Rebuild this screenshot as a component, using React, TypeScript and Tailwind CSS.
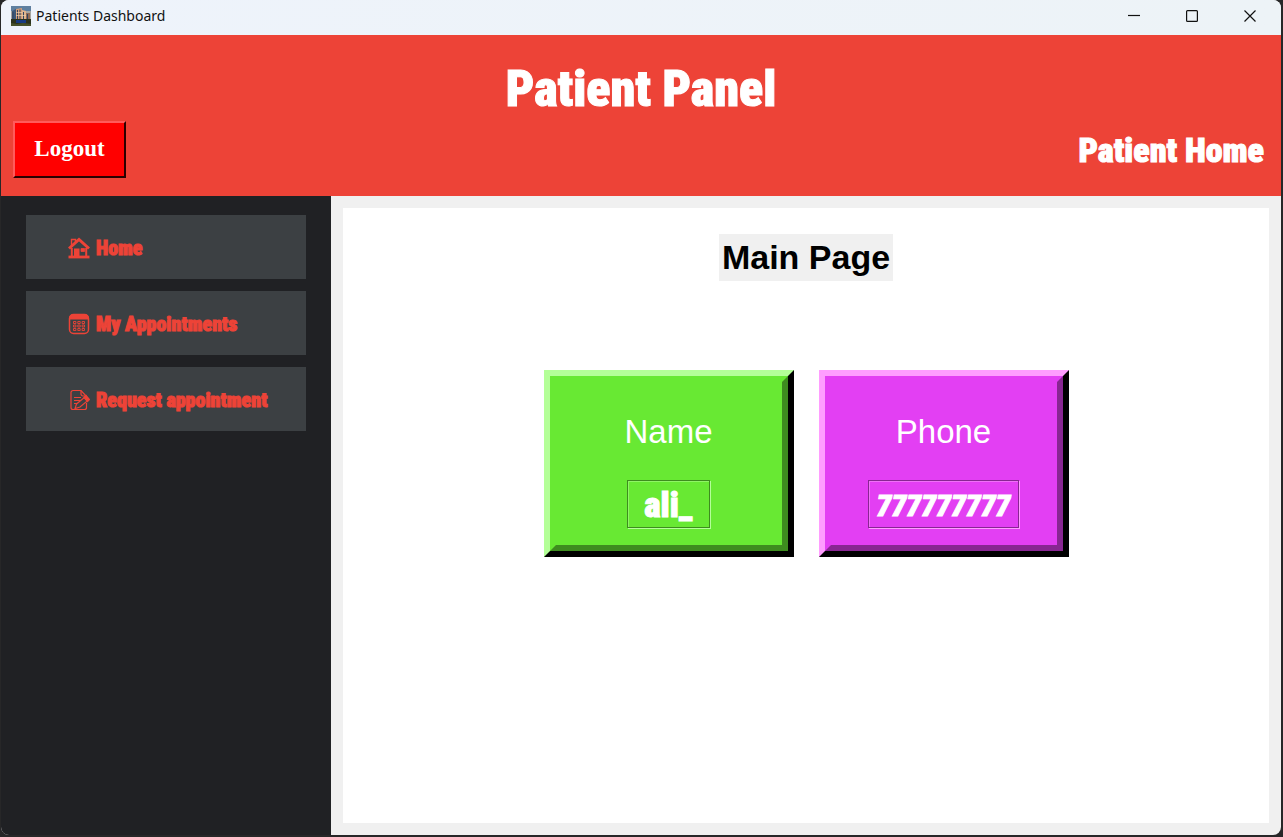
import React from "react";

const display =
  "font-['Impact','Roboto_Condensed','Liberation_Sans_Narrow',sans-serif] font-black";

function AppIcon() {
  return (
    <svg width="20" height="20" viewBox="0 0 20 20" aria-hidden="true">
      <rect width="20" height="20" fill="#5f7f9f" />
      <rect y="5" width="20" height="8" fill="#a6a5a0" />
      <path d="M1 5l4-2v11H1z" fill="#3c5878" />
      <path d="M5 3l6-1v12H5z" fill="#d09d78" />
      <path d="M11 4l4 1v9h-4z" fill="#e0b48d" />
      <path d="M15 7h4v7h-4z" fill="#8f6a55" />
      <path d="M2 6v7M6.5 4v9M9 3.500v9.500M12.500 6v7M16.500 8v5" stroke="#34435d" />
      <path d="M5 6.500h6M5 9.500h10" stroke="#f0d2aa" strokeWidth=".7" />
      <path d="M0 13h20v7H0z" fill="#2b321d" />
      <path d="M5 14h10v3H5z" fill="#173b82" />
      <path d="M0 17l6 1 6-1 8 1v2H0z" fill="#47512b" />
    </svg>
  );
}

function HomeIcon() {
  return (
    <svg width="22" height="22" viewBox="0 0 22 22" fill="none" stroke="currentColor" aria-hidden="true">
      <path d="M1 11.500L11 2.500l10 9" strokeWidth="3" />
      <path d="M3.500 9V2.500h4v3" strokeWidth="1.400" />
      <path d="M3.800 11v9M18.200 11v9" strokeWidth="2" />
      <path d="M0.500 20h21" strokeWidth="2.800" />
      <path d="M6 11.500h5.500V20H6z" fill="currentColor" stroke="none" />
      <path d="M13 11.500h3.500v3H13z" fill="currentColor" strokeWidth=".8" />
    </svg>
  );
}

function CalendarIcon() {
  return (
    <svg width="22" height="22" viewBox="0 0 22 22" fill="none" stroke="currentColor" aria-hidden="true">
      <rect x="1.500" y="1.500" width="19" height="19" rx="4" strokeWidth="1.500" />
      <path d="M1.500 6V5a3.500 3.500 0 0 1 3.500-3.500h12A3.500 3.500 0 0 1 20.500 5v1z" fill="currentColor" />
      <path
        d="M5.500 8.500h2.400v2H5.500zM9.800 8.500h2.400v2H9.800zM14.100 8.500h2.400v2h-2.400zM5.500 12h2.400v2H5.500zM9.800 12h2.400v2H9.800zM14.100 12h2.400v2h-2.400zM5.500 15.500h2.400v2H5.500zM9.800 15.500h2.400v2H9.800zM14.100 15.500h2.400v2h-2.400z"
        strokeWidth=".9"
      />
    </svg>
  );
}

function RequestIcon() {
  return (
    <svg width="22" height="22" viewBox="0 0 22 22" fill="none" stroke="currentColor" strokeWidth="1.200" aria-hidden="true">
      <path d="M18.500 7.500L13 1.500H5A2 2 0 0 0 3 3.500v15a2 2 0 0 0 2 2h11.500a2 2 0 0 0 2-2V14" />
      <path d="M13 1.500v3.500a2 2 0 0 0 2 2h3.500" />
      <path d="M6 8.500h7M6 11.500h7M6 14.500h3" strokeWidth="1" />
      <path d="M8.500 15l9-7.500 3 3.500-8.500 7-5 1.500z" />
      <path d="M16 8.500l2-2 3.500 4-2 2z" fill="currentColor" />
    </svg>
  );
}

const links = [
  { label: "Home", Icon: HomeIcon },
  { label: "My Appointments", Icon: CalendarIcon },
  { label: "Request appointment", Icon: RequestIcon },
];

function WindowButton({ label, path }: { label: string; path: string }) {
  return (
    <button aria-label={label} className="flex h-8 w-[58px] items-center justify-center">
      <svg width="12" height="12" viewBox="0 0 12 12" fill="none" stroke="#111" strokeWidth="1.200">
        <path d={path} />
      </svg>
    </button>
  );
}

export default function App() {
  return (
    <div className="min-h-screen bg-[#272728] pr-[2px] pb-[2px] pl-px">
      <div className="flex min-h-[calc(100vh-2px)] flex-col overflow-hidden rounded-lg bg-[#f0f0f0]">
        <div className="flex h-[35px] items-center bg-gradient-to-r from-[#eef3fb] to-[#edf3f7] pr-[2px] pb-1 pl-[10px]">
          <AppIcon />
          <span className="ml-[5px] font-['Noto_Sans',sans-serif] text-[14px] text-[#111]">Patients Dashboard</span>
          <div className="ml-auto flex">
            <WindowButton label="Minimize" path="M0 5.500h12" />
            <WindowButton label="Maximize" path="M1.500 .600h9q.900 0 .900.900v9q0 .900-.900.900h-9q-.900 0-.900-.900v-9q0-.900.900-.900z" />
            <WindowButton label="Close" path="M.500.500l11 11M11.500.500l-11 11" />
          </div>
        </div>

        <header className="bg-[#ed4337] px-3 pt-[22px] pb-[18px] text-white">
          <h1 className={`${display} text-center text-[50px] leading-[64px] [-webkit-text-stroke:1px_white]`}>
            Patient Panel
          </h1>
          <div className="flex items-center justify-between pr-[5px]">
            <button className="h-[57px] w-[113px] border-2 border-t-[#ff5b5b] border-r-[#2b0000] border-b-[#2b0000] border-l-[#ff5b5b] bg-[#ff0000] font-['Liberation_Serif',serif] text-[23px] font-bold">
              Logout
            </button>
            <h2 className={`${display} text-[34px] leading-[56px] [-webkit-text-stroke:1px_white]`}>Patient Home</h2>
          </div>
        </header>

        <div className="flex grow">
          <nav className="flex w-[330px] shrink-0 flex-col gap-3 bg-[#202124] px-[25px] pt-[19px]">
            {links.map(({ label, Icon }) => (
              <button key={label} className="flex h-16 items-center gap-[6px] bg-[#3c4043] pt-[2px] pl-[42px] text-[#ed4337]">
                <Icon />
                <span className={`${display} text-[20px] whitespace-nowrap [-webkit-text-stroke:1px_#ed4337]`}>{label}</span>
              </button>
            ))}
          </nav>

          <div className="flex grow p-3">
            <main className="flex grow flex-col items-center bg-white pt-[26px] font-['Liberation_Sans',sans-serif]">
              <h3 className="bg-[#f0f0f0] px-[3px] text-[34px] leading-[47px] font-bold text-black">Main Page</h3>
              <div className="mt-[89px] flex gap-[25px]">
                <Card
                  label="Name"
                  value="ali_"
                  className="border-t-[#b4ff98] border-r-black border-b-black border-l-[#b4ff98] bg-[#68e933]"
                  inner="border-r-[#3e8c1f] border-b-[#3e8c1f]"
                  groove="border-[#3e8c1f] px-4 text-[35px] shadow-[1px_1px_0_#b4ff98,inset_1px_1px_0_#8ff565]"
                />
                <Card
                  label="Phone"
                  value="777777777"
                  className="border-t-[#ff9dff] border-r-black border-b-black border-l-[#ff9dff] bg-[#e33ff3]"
                  inner="border-r-[#882692] border-b-[#882692]"
                  groove="border-[#882692] px-2 text-[30px] italic shadow-[1px_1px_0_#ff9dff,inset_1px_1px_0_#f070f8]"
                />
              </div>
            </main>
          </div>
        </div>
      </div>
    </div>
  );
}

type CardProps = { label: string; value: string; className: string; inner: string; groove: string };

function Card({ label, value, className, inner, groove }: CardProps) {
  return (
    <section className={`w-[250px] border-[6px] text-white ${className}`}>
      <div className={`flex h-[175px] flex-col items-center border-[6px] border-t-transparent border-l-transparent ${inner}`}>
        <p className="mt-[30px] text-[33px] leading-10">{label}</p>
        <p className={`${display} mt-[28px] border pt-1 leading-[42px] [-webkit-text-stroke:1px_white] ${groove}`}>
          {value}
        </p>
      </div>
    </section>
  );
}
